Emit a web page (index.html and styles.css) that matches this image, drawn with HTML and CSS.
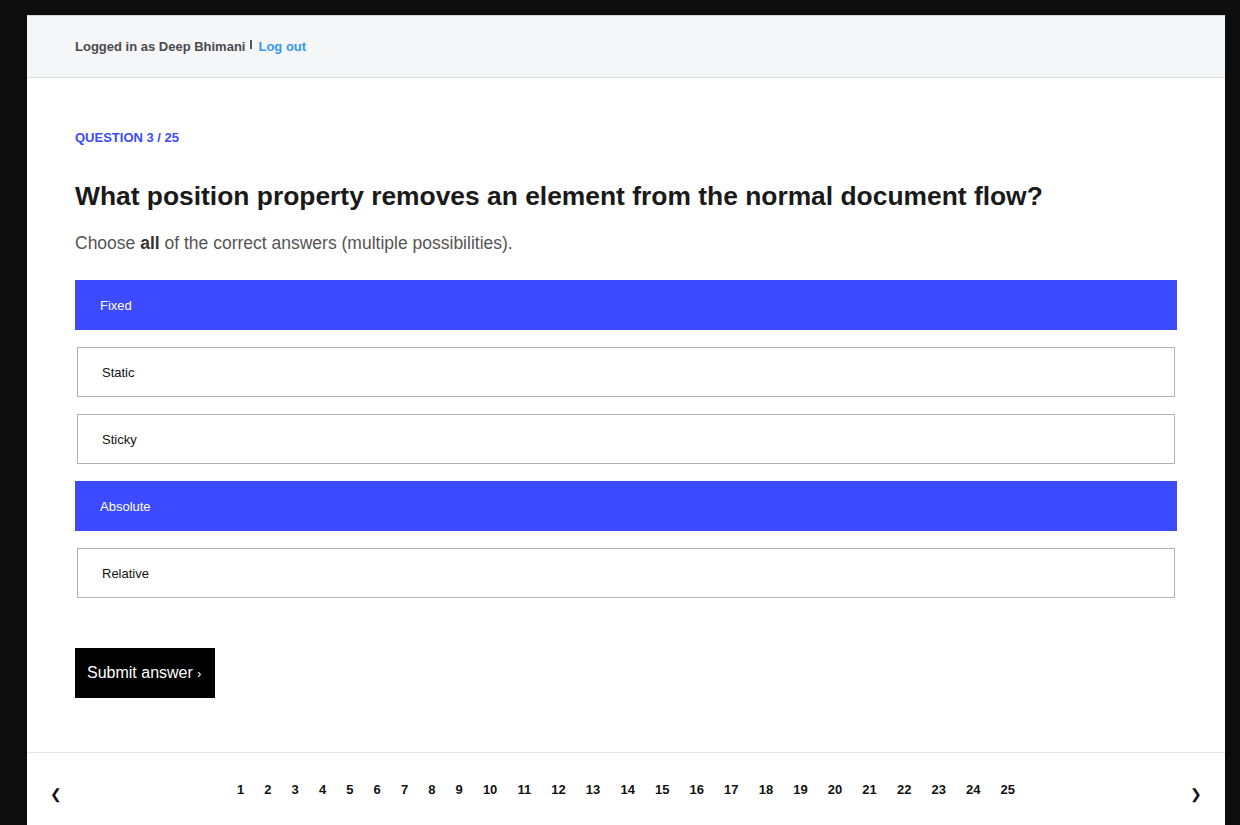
FILE: index.html
```html
<!DOCTYPE html>
<html lang="en">
<head>
<meta charset="utf-8">
<title>Quiz</title>
<link rel="stylesheet" href="styles.css">
</head>
<body>
<div class="window">
  <header class="topbar">
    <span class="user">Logged in as Deep Bhimani</span>
    <span class="sep"></span>
    <a class="logout" href="#">Log out</a>
  </header>
  <main class="content">
    <div class="qlabel">Question 3 / 25</div>
    <h1 class="question">What position property removes an element from the normal document flow?</h1>
    <p class="hint">Choose <b>all</b> of the correct answers (multiple possibilities).</p>
    <div class="options">
      <div class="option selected">Fixed</div>
      <div class="option">Static</div>
      <div class="option">Sticky</div>
      <div class="option selected">Absolute</div>
      <div class="option">Relative</div>
    </div>
    <button class="submit">Submit answer <span class="chev">›</span></button>
  </main>
  <footer class="pager">
    <span class="arrow">&#10094;</span>
    <div class="pages">
      <span>1</span><span>2</span><span>3</span><span>4</span><span>5</span><span>6</span><span>7</span><span>8</span><span>9</span><span>10</span><span>11</span><span>12</span><span>13</span><span>14</span><span>15</span><span>16</span><span>17</span><span>18</span><span>19</span><span>20</span><span>21</span><span>22</span><span>23</span><span>24</span><span>25</span>
    </div>
    <span class="arrow">&#10095;</span>
  </footer>
</div>
</body>
</html>
```

FILE: styles.css
```css
* { box-sizing: border-box; }
html, body { margin: 0; height: 100%; }
body {
  background: #0d0d0d;
  padding: 15px 15px 0 27px;
  font-family: "Liberation Sans", Arial, sans-serif;
  overflow: hidden;
}
.window {
  background: #fff;
  min-height: 900px;
  border-top: 1px solid #d8d8d8;
}
.topbar {
  height: 62px;
  background: #f5f6f8;
  border-bottom: 1px solid #dcdcdc;
  display: flex;
  align-items: center;
  padding: 0 48px;
  font-size: 13px;
  font-weight: bold;
}
.user { color: #4a4a4e; }
.sep {
  display: inline-block;
  width: 2px;
  height: 9px;
  background: #555;
  margin: 0 6px 4px 5px;
}
.logout { color: #3399f3; text-decoration: none; }
.content { padding: 52px 48px 0; }
.qlabel {
  color: #3c4bff;
  font-size: 13px;
  font-weight: bold;
  text-transform: uppercase;
  line-height: 15px;
}
.question {
  margin: 35px 0 0;
  font-size: 26.4px;
  line-height: 32px;
  color: #1a1a1a;
}
.hint {
  margin: 19px 0 0;
  font-size: 17.5px;
  line-height: 24px;
  color: #555;
}
.hint b { color: #333; }
.options {
  margin-top: 25px;
  display: flex;
  flex-direction: column;
  gap: 17px;
}
.option {
  height: 50px;
  display: flex;
  align-items: center;
  font-size: 13px;
  color: #111;
  margin: 0 2px;
  padding: 0 24px;
  border: 1px solid #b3b3b3;
}
.option.selected {
  margin: 0;
  padding: 0 25px;
  border: none;
  background: #3c4bff;
  color: #fff;
}
.submit {
  margin-top: 50px;
  height: 50px;
  padding: 0 14px 0 12px;
  background: #000;
  color: #fff;
  border: none;
  font-family: "Liberation Sans", Arial, sans-serif;
  font-size: 16px;
  cursor: pointer;
}
.chev { font-size: 12px; }
.pager {
  margin-top: 54px;
  border-top: 1px solid #e2e6ea;
  display: flex;
  align-items: flex-start;
  justify-content: space-between;
  padding: 29px 23px 0 23px;
}
.arrow {
  font-size: 14px;
  color: #111;
  margin-top: 4px;
  width: 12px;
  text-align: center;
}
.pages {
  display: flex;
  gap: 20.1px;
  font-size: 13px;
  font-weight: bold;
  color: #111;
}
```
